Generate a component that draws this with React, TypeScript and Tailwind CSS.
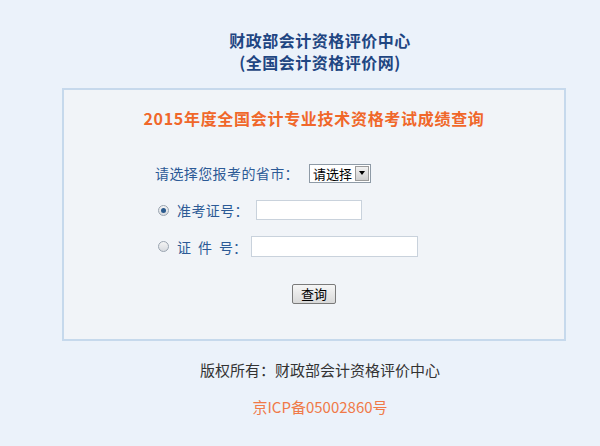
import React from 'react'

const font = { fontFamily: '"Noto Sans CJK SC", "Noto Sans", sans-serif' }

function Radio({ checked }: { checked?: boolean }) {
  return (
    <span className="flex h-[11px] w-[11px] items-center justify-center rounded-full border border-[#9aa4b0] bg-gradient-to-b from-[#f4f4f4] to-[#d8dbe0]">
      {checked && <span className="h-[5px] w-[5px] rounded-full bg-[#2a5a8e]" />}
    </span>
  )
}

export default function App() {
  return (
    <div className="min-h-[446px] w-full bg-[#ebf2fa]" style={font}>
      <div className="pl-[40px]">
        {/* Header */}
        <div className="pt-[29px] text-center text-[16px] font-bold leading-[22px] tracking-[0.5px] text-[#1f4682]">
          <div>财政部会计资格评价中心</div>
          <div>(全国会计资格评价网)</div>
        </div>

        {/* Query box */}
        <div className="ml-[22px] mt-[15px] h-[253px] w-[504px] border-2 border-[#c6d9ec] bg-[#f1f4f8]">
          <div className="pt-[17px] text-center text-[16px] font-bold leading-[22px] tracking-[0.7px] text-[#f0672a]">
            2015年度全国会计专业技术资格考试成绩查询
          </div>

          <div className="whitespace-nowrap pl-[91px] pt-[34px] text-[14px] leading-[20px] text-[#2c5a96]">
            <div className="flex items-center">
              <span className="w-[154px] tracking-[0.4px]">请选择您报考的省市：</span>
              <span className="flex h-[19px] items-center border border-[#8e9aa6] bg-white pl-[3px]">
                <span className="text-[13px] leading-[17px] text-black">请选择</span>
                <span className="ml-[3px] mr-[1px] flex h-[15px] w-[14px] items-center justify-center border border-[#9a9a9a] bg-gradient-to-b from-[#f2f2f2] to-[#cfcfcf]">
                  <span className="h-0 w-0 border-x-[3px] border-t-[4px] border-x-transparent border-t-black" />
                </span>
              </span>
            </div>

            <div className="mt-[17px] flex items-center">
              <span className="ml-[3px]">
                <Radio checked />
              </span>
              <span className="ml-[8px] w-[79px] tracking-[0.4px]">准考证号：</span>
              <span className="h-[20px] w-[106px] border border-[#c9d2dc] bg-white" />
            </div>

            <div className="mt-[16px] flex items-center">
              <span className="ml-[3px]">
                <Radio />
              </span>
              <span className="ml-[8px] flex w-[74px]">
                <span className="mr-[7px]">证</span>
                <span className="mr-[7px]">件</span>
                <span>号：</span>
              </span>
              <span className="h-[21px] w-[167px] border border-[#c9d2dc] bg-white" />
            </div>
          </div>

          <div className="mt-[27px] flex justify-center">
            <button className="h-[20px] w-[44px] rounded-[2px] border border-[#7a7a7a] bg-gradient-to-b from-[#f6f6f6] to-[#d9d9d9] text-[13px] leading-[16px] text-black">
              查询
            </button>
          </div>
        </div>

        {/* Footer */}
        <div className="pt-[18px] text-center text-[15px] leading-[22px] text-[#333333]">
          版权所有：财政部会计资格评价中心
        </div>
        <div className="pt-[15px] text-center text-[15px] leading-[22px] text-[#f07a48]">
          京ICP备05002860号
        </div>
      </div>
    </div>
  )
}
